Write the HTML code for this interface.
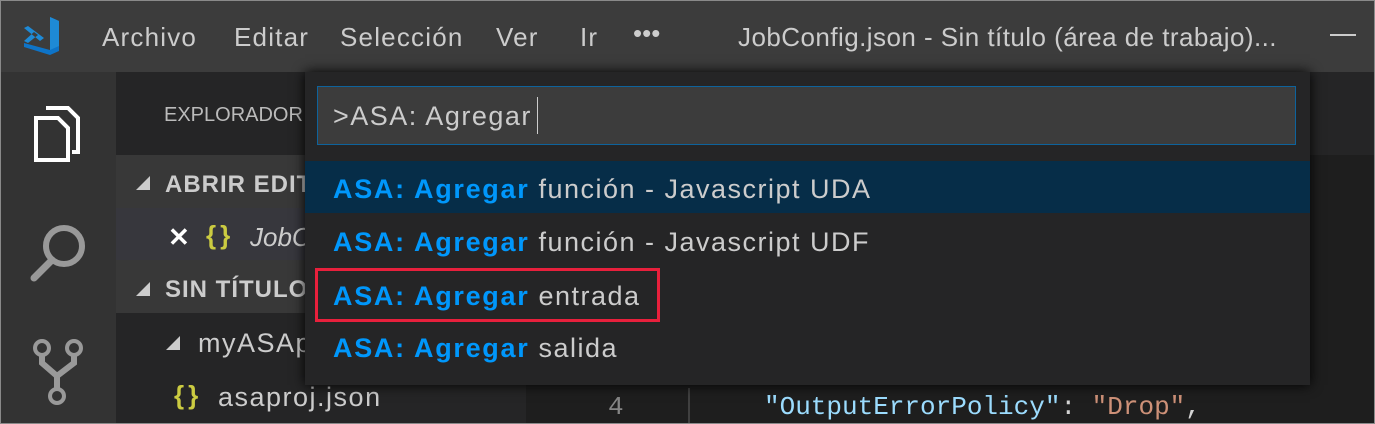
<!DOCTYPE html>
<html><head><meta charset="utf-8"><style>
*{margin:0;padding:0;box-sizing:border-box}
body{width:1375px;height:424px;overflow:hidden;background:#1e1e1e;font-family:"Liberation Sans",sans-serif;position:relative}
.a{position:absolute;white-space:nowrap}
.q{font-size:27px;letter-spacing:1.5px;color:#ccc}
.q b{color:#0097fb;letter-spacing:1.7px}
.m{font-size:26px;color:#ccc;top:22px;letter-spacing:1.2px}
</style></head><body>
<div class="a" style="left:0;top:0;width:1375px;height:72px;background:#3c3c3c"></div>
<div class="a" style="left:0;top:72px;width:116px;height:352px;background:#333"></div>
<div class="a" style="left:116px;top:72px;width:410px;height:352px;background:#252526"></div>
<div class="a" style="left:116px;top:155px;width:410px;height:53px;background:#383838"></div>
<div class="a" style="left:116px;top:208px;width:410px;height:52px;background:#37373d"></div>
<div class="a" style="left:116px;top:260px;width:410px;height:53px;background:#383838"></div>
<div class="a" style="left:526px;top:72px;width:849px;height:83px;background:#252526"></div>
<div class="a" style="left:526px;top:385px;width:160px;height:39px;background:#1e1e1e"></div>
<div class="a" style="left:688px;top:388px;width:2px;height:36px;background:#404040"></div>
<!-- logo -->
<svg class="a" style="left:22px;top:16px" width="38" height="40" viewBox="0 0 38 40"><path d="M28 1 L37 5 V35 L28 39 L2 31 L2 27 L28 34 Z" fill="#0e74c8"/><path d="M28 1 V34 L37 30 V5 Z" fill="#1e8ad6"/><path d="M2 12 L6 10 L22 22 L18 25 Z M2 25 L6 27 L16 19 L12 16 Z" fill="#1e8ad6"/></svg>
<div class="a m" style="left:102px">Archivo</div>
<div class="a m" style="left:234px">Editar</div>
<div class="a m" style="left:340px">Selección</div>
<div class="a m" style="left:496px">Ver</div>
<div class="a m" style="left:580px">Ir</div>
<div class="a" style="left:633px;top:18px;font-size:26px;color:#ccc;letter-spacing:0px">•••</div>
<div class="a" style="left:738px;top:22px;font-size:26px;color:#ccc;letter-spacing:0.45px">JobConfig.json - Sin título (área de trabajo)...</div>
<div class="a" style="left:1330px;top:34px;width:26px;height:2px;background:#ccc"></div>
<!-- activity icons -->
<svg class="a" style="left:32px;top:104px" width="52" height="58" viewBox="0 0 52 58"><path d="M14 4 H36 L46 14 V48 H40" fill="none" stroke="#fff" stroke-width="4"/><path d="M4 14 H26 L36 24 V56 H4 Z" fill="none" stroke="#fff" stroke-width="4"/></svg>
<svg class="a" style="left:28px;top:222px" width="62" height="62" viewBox="0 0 62 62"><circle cx="36" cy="24" r="18" fill="none" stroke="#999" stroke-width="6"/><path d="M24 38 L6 56" stroke="#999" stroke-width="7" stroke-linecap="round"/></svg>
<svg class="a" style="left:32px;top:338px" width="52" height="70" viewBox="0 0 52 70"><circle cx="10" cy="10" r="7" fill="none" stroke="#999" stroke-width="4"/><circle cx="42" cy="10" r="7" fill="none" stroke="#999" stroke-width="4"/><circle cx="25" cy="58" r="7" fill="none" stroke="#999" stroke-width="4"/><path d="M10 17 V25 L25 38 L42 25 V17 M25 38 V51" fill="none" stroke="#999" stroke-width="6"/></svg>
<div class="a" style="left:164px;top:104px;font-size:20px;color:#bbb">EXPLORADOR</div>
<div class="a" style="left:136px;top:176px;width:0;height:0;border-left:14px solid transparent;border-bottom:14px solid #ccc"></div>
<div class="a" style="left:165px;top:171px;font-size:24px;font-weight:bold;color:#ccc;letter-spacing:1px">ABRIR EDITORES</div>
<div class="a" style="left:168px;top:222px;font-size:26px;font-weight:bold;color:#fff">✕</div>
<div class="a" style="left:206px;top:220px;font-size:26px;font-weight:bold;color:#cbcb41;letter-spacing:4px">{}</div>
<div class="a" style="left:250px;top:222px;font-size:26px;font-style:italic;color:#ccc">JobConfig.json</div>
<div class="a" style="left:136px;top:282px;width:0;height:0;border-left:14px solid transparent;border-bottom:14px solid #ccc"></div>
<div class="a" style="left:165px;top:276px;font-size:24px;font-weight:bold;color:#ccc;letter-spacing:1px">SIN TÍTULO</div>
<div class="a" style="left:166px;top:336px;width:0;height:0;border-left:14px solid transparent;border-bottom:14px solid #ccc"></div>
<div class="a" style="left:198px;top:328px;font-size:27px;color:#ccc;letter-spacing:1.5px">myASAproj</div>
<div class="a" style="left:174px;top:380px;font-size:26px;font-weight:bold;color:#cbcb41;letter-spacing:4px">{}</div>
<div class="a" style="left:218px;top:382px;font-size:27px;color:#ccc;letter-spacing:1.5px">asaproj.json</div>
<div class="a" style="left:608px;top:392px;font-size:26px;font-family:'Liberation Mono',monospace;color:#858585">4</div>
<div class="a" style="left:764px;top:392px;font-size:26px;font-family:'Liberation Mono',monospace;color:#9cdcfe">"OutputErrorPolicy"<span style="color:#d4d4d4">: </span><span style="color:#ce9178">"Drop"</span><span style="color:#d4d4d4">,</span></div>
<!-- quick open -->
<div class="a" style="left:305px;top:72px;width:1005px;height:313px;background:#252526;box-shadow:0 0 12px #000"></div>
<div class="a" style="left:317px;top:86px;width:979px;height:59px;background:#3c3c3c;border:1px solid #0e639c"></div>
<div class="a" style="left:333px;top:101px;font-size:27px;color:#ccc;letter-spacing:1.5px">&gt;ASA: Agregar</div>
<div class="a" style="left:537px;top:97px;width:1px;height:37px;background:#ccc"></div>
<div class="a" style="left:305px;top:161px;width:1005px;height:52px;background:#062d48"></div>
<div class="a q" style="left:333px;top:174px"><b>ASA: Agregar</b> función - Javascript UDA</div>
<div class="a q" style="left:333px;top:227px"><b>ASA: Agregar</b> función - Javascript UDF</div>
<div class="a q" style="left:333px;top:281px"><b>ASA: Agregar</b> entrada</div>
<div class="a q" style="left:333px;top:333px"><b>ASA: Agregar</b> salida</div>
<div class="a" style="left:315px;top:268px;width:345px;height:54px;border:3px solid #e8203c"></div>
<div class="a" style="left:0;top:0;width:1375px;height:424px;border:1px solid #8a8a8a"></div>
</body></html>
